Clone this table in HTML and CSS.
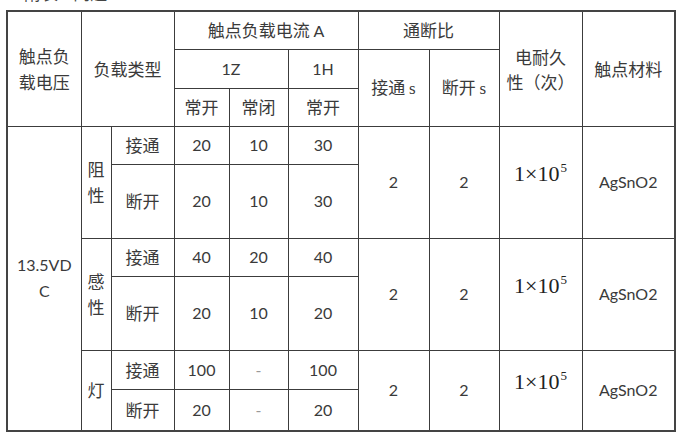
FILE: index.html
```
<!DOCTYPE html>
<html lang="zh-CN">
<head>
<meta charset="utf-8">
<title>触点负载参数</title>
<link rel="stylesheet" href="styles.css">
</head>
<body>
<div class="caption"><span class="caption-text">附表&nbsp;&nbsp;&nbsp;&nbsp;问题</span></div>
<table class="spec">
  <colgroup>
    <col class="c1"><col class="c2"><col class="c3"><col class="c4"><col class="c5"><col class="c6"><col class="c7"><col class="c8"><col class="c9"><col class="c10">
  </colgroup>
  <tr class="h1">
    <th rowspan="3">触点负<br>载电压</th>
    <th rowspan="3" colspan="2">负载类型</th>
    <th colspan="3">触点负载电流 <span class="lat">A</span></th>
    <th colspan="2">通断比</th>
    <th rowspan="3" class="tight">电耐久<br>性（次）</th>
    <th rowspan="3">触点材料</th>
  </tr>
  <tr class="h2">
    <th colspan="2" class="lat">1Z</th>
    <th class="lat">1H</th>
    <th rowspan="2">接通 <span class="serif">s</span></th>
    <th rowspan="2">断开 <span class="serif">s</span></th>
  </tr>
  <tr class="h3">
    <th>常开</th>
    <th>常闭</th>
    <th>常开</th>
  </tr>
  <tr class="r-short">
    <td rowspan="6" class="lat">13.5VD<br>C</td>
    <td rowspan="2" class="vert">阻<br>性</td>
    <td>接通</td>
    <td class="lat">20</td><td class="lat">10</td><td class="lat">30</td>
    <td rowspan="2" class="lat">2</td>
    <td rowspan="2" class="lat">2</td>
    <td rowspan="2" class="life">1×10<sup>5</sup></td>
    <td rowspan="2" class="lat">AgSnO2</td>
  </tr>
  <tr class="r-tall">
    <td>断开</td>
    <td class="lat">20</td><td class="lat">10</td><td class="lat">30</td>
  </tr>
  <tr class="r-short">
    <td rowspan="2" class="vert">感<br>性</td>
    <td>接通</td>
    <td class="lat">40</td><td class="lat">20</td><td class="lat">40</td>
    <td rowspan="2" class="lat">2</td>
    <td rowspan="2" class="lat">2</td>
    <td rowspan="2" class="life">1×10<sup>5</sup></td>
    <td rowspan="2" class="lat">AgSnO2</td>
  </tr>
  <tr class="r-tall">
    <td>断开</td>
    <td class="lat">20</td><td class="lat">10</td><td class="lat">20</td>
  </tr>
  <tr class="r-lamp1">
    <td rowspan="2" class="vert">灯</td>
    <td>接通</td>
    <td class="lat">100</td><td class="lat dash">-</td><td class="lat">100</td>
    <td rowspan="2" class="lat">2</td>
    <td rowspan="2" class="lat">2</td>
    <td rowspan="2" class="life">1×10<sup>5</sup></td>
    <td rowspan="2" class="lat">AgSnO2</td>
  </tr>
  <tr class="r-lamp2">
    <td>断开</td>
    <td class="lat">20</td><td class="lat dash">-</td><td class="lat">20</td>
  </tr>
</table>
</body>
</html>
```
FILE: styles.css
```
html, body {
  margin: 0;
  padding: 0;
  background: #ffffff;
}

body {
  font-family: "Noto Sans CJK SC", "Noto Sans", sans-serif;
  color: #333333;
  width: 682px;
  height: 440px;
  overflow: hidden;
}

.caption {
  height: 10px;
  overflow: hidden;
  padding-left: 24px;
}

.caption-text {
  display: block;
  font-size: 17px;
  line-height: 17px;
  margin-top: -16px;
  color: #444;
}

.spec {
  border-collapse: collapse;
  table-layout: fixed;
  width: 669px;
  margin-left: 6px;
  border: 2px solid #444;
}

.c1 { width: 74px; }
.c2 { width: 30px; }
.c3 { width: 63px; }
.c4 { width: 55px; }
.c5 { width: 59px; }
.c6 { width: 70px; }
.c7 { width: 71px; }
.c8 { width: 70px; }
.c9 { width: 83px; }
.c10 { width: 93px; }

.spec th,
.spec td {
  border: 1px solid #3c3c3c;
  padding: 0;
  text-align: center;
  vertical-align: middle;
  font-weight: normal;
  font-size: 17px;
  line-height: 26px;
  color: #3a3a3a;
}

.spec .tight {
  line-height: 25px;
}

.h1 { height: 38px; }
.h2 { height: 39px; }
.h3 { height: 38px; }
.r-short { height: 38px; }
.r-tall { height: 74px; }
.r-lamp1 { height: 39px; }
.r-lamp2 { height: 42px; }

.spec .lat,
.lat {
  font-family: "Lato", "Liberation Sans", sans-serif;
  font-size: 16px;
}

.serif {
  font-family: "Liberation Serif", serif;
  font-size: 17px;
}

.spec .vert {
  line-height: 26px;
}

.spec .dash {
  color: #999999;
}

.spec .life {
  font-family: "Liberation Serif", serif;
  font-size: 22px;
  color: #222222;
  padding-bottom: 22px;
  line-height: 24px;
}

.life sup {
  font-size: 13px;
  vertical-align: 9px;
  margin-left: 1px;
}
```
